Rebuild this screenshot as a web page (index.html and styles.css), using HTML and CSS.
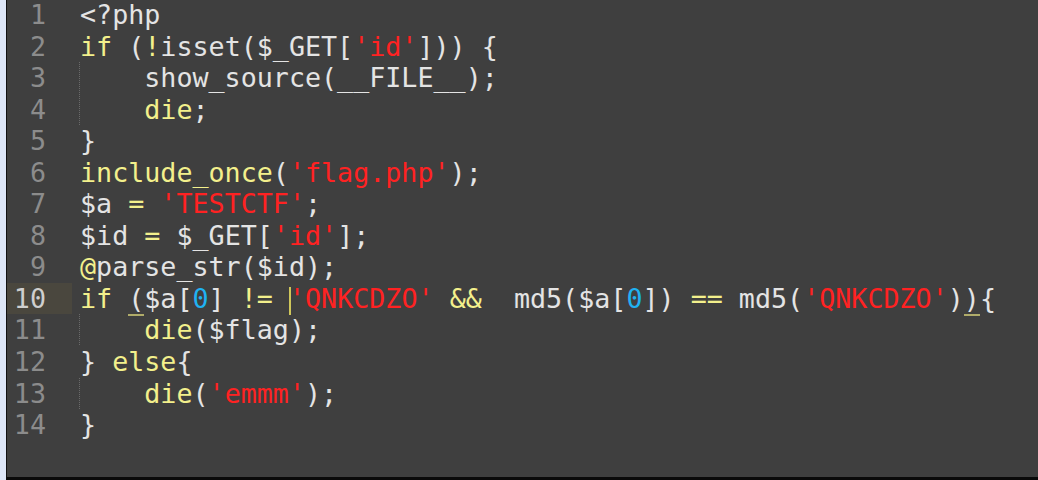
FILE: index.html
```html
<!DOCTYPE html>
<html>
<head>
<meta charset="utf-8">
<link rel="stylesheet" href="styles.css">
</head>
<body>
<div class="editor">
  <div class="lines">
    <div class="line"><span class="num">1</span><span class="code">&lt;?php</span></div>
    <div class="line"><span class="num">2</span><span class="code"><span class="k">if</span> (<span class="k">!</span>isset($_GET[<span class="s">'id'</span>])) {</span></div>
    <div class="line"><span class="num">3</span><span class="code"><span class="ind">    </span>show_source(__FILE__);</span></div>
    <div class="line"><span class="num">4</span><span class="code"><span class="ind">    </span><span class="k">die</span>;</span></div>
    <div class="line"><span class="num">5</span><span class="code">}</span></div>
    <div class="line"><span class="num">6</span><span class="code"><span class="k">include_once</span>(<span class="s">'flag.php'</span>);</span></div>
    <div class="line"><span class="num">7</span><span class="code">$a <span class="k">=</span> <span class="s">'TESTCTF'</span>;</span></div>
    <div class="line"><span class="num">8</span><span class="code">$id <span class="k">=</span> $_GET[<span class="s">'id'</span>];</span></div>
    <div class="line"><span class="num">9</span><span class="code"><span class="k">@</span>parse_str($id);</span></div>
    <div class="line current"><span class="num">10</span><span class="code"><span class="k">if</span> <span class="match">(</span>$a[<span class="n">0</span>] <span class="k">!=</span> <span class="cursor"></span><span class="s">'QNKCDZO'</span> <span class="k">&amp;&amp;</span>  md5($a[<span class="n">0</span>]) <span class="k">==</span> md5(<span class="s">'QNKCDZO'</span>)<span class="match">)</span>{</span></div>
    <div class="line"><span class="num">11</span><span class="code"><span class="ind">    </span><span class="k">die</span>($flag);</span></div>
    <div class="line"><span class="num">12</span><span class="code">} <span class="k">else</span>{</span></div>
    <div class="line"><span class="num">13</span><span class="code"><span class="ind">    </span><span class="k">die</span>(<span class="s">'emmm'</span>);</span></div>
    <div class="line"><span class="num">14</span><span class="code">}</span></div>
  </div>
</div>
</body>
</html>
```

FILE: styles.css
```css
html, body {
  margin: 0;
  padding: 0;
  height: 100%;
}
body {
  background: #dde6f7;
  overflow: hidden;
}
.editor {
  margin-left: 6px;
  height: 477px;
  background: #3f3f3f;
  border-left: 1px solid #111;
  border-bottom: 3px solid #0a0a0a;
  overflow: hidden;
}
.lines {
  margin-top: -1px;
  font-family: "DejaVu Sans Mono", monospace;
  font-size: 26.7px;
  line-height: 31.55px;
  color: #e4e4e4;
}
.line {
  display: flex;
  height: 31.55px;
  white-space: pre;
}
.num {
  width: 39px;
  padding-right: 26px;
  text-align: right;
  color: #8c8c8c;
  flex: none;
}
.current .num {
  background: #4a473e;
  color: #cfcfcf;
}
.code {
  padding-left: 8px;
  position: relative;
}
.k { color: #f3f08c; }
.s { color: #ff2222; }
.n { color: #1fb2f2; }
.ind {
  position: relative;
}
.ind::before {
  content: "";
  position: absolute;
  left: -1px;
  top: 0;
  bottom: 0;
  border-left: 1px dotted #6a6a6a;
}
.match {
  border-bottom: 2px solid #b0ac6a;
}
.cursor {
  display: inline-block;
  width: 0;
  height: 28px;
  border-left: 2px solid #cfc65a;
  vertical-align: -7px;
  margin-right: -2px;
}
```
